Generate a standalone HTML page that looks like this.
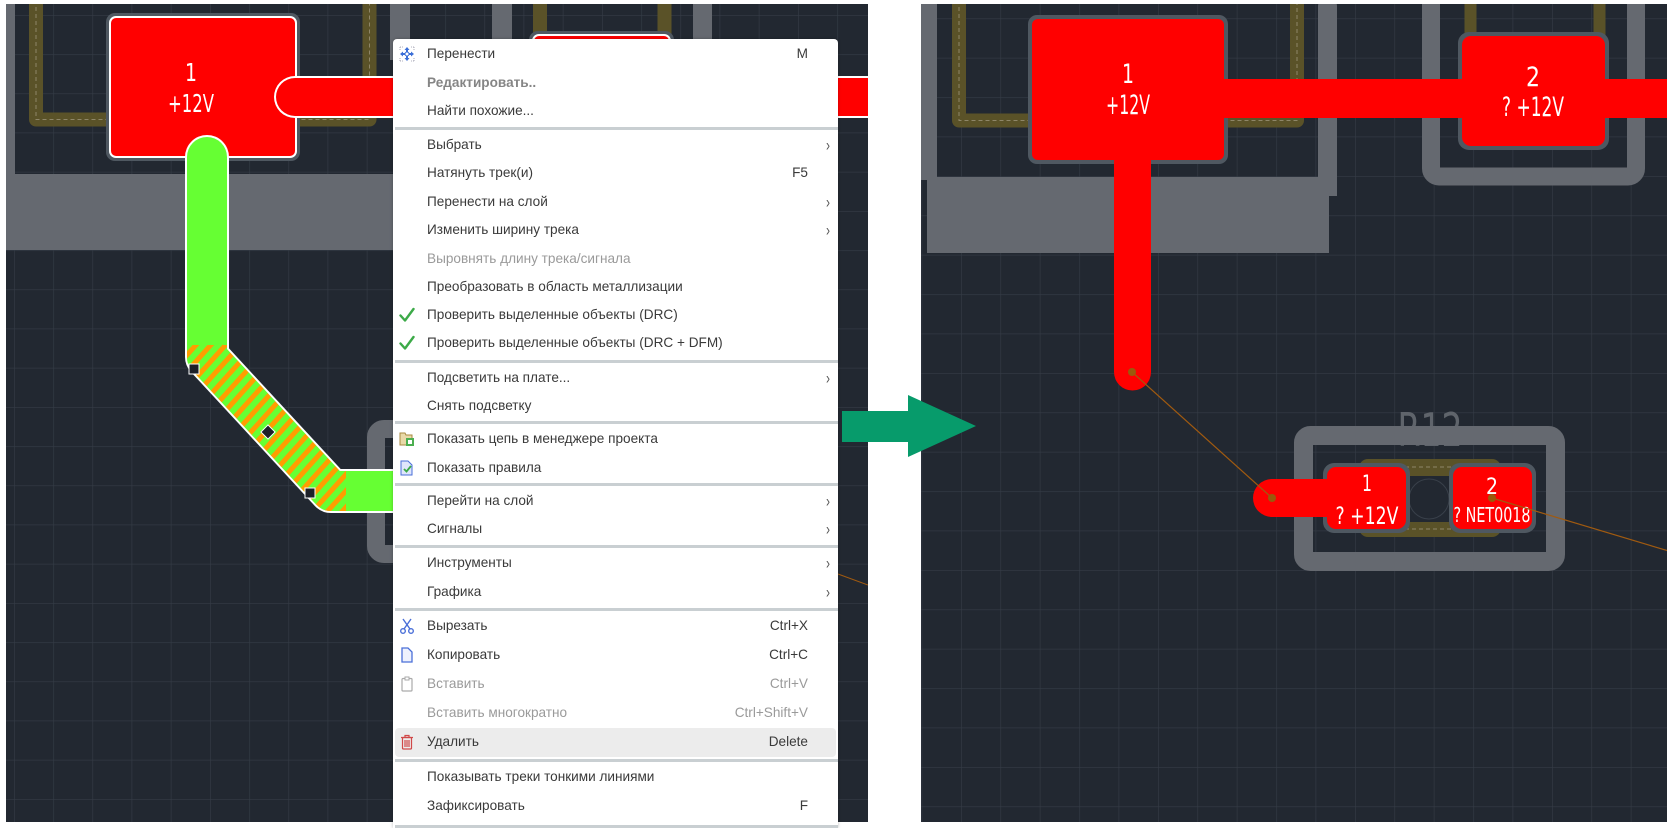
<!DOCTYPE html>
<html><head><meta charset="utf-8">
<style>
html,body{margin:0;padding:0;background:#fff;}
body{width:1672px;height:828px;position:relative;overflow:hidden;font-family:"Liberation Sans",sans-serif;}
svg.bg{position:absolute;left:0;top:0;}
.menu{position:absolute;left:393px;top:39px;width:445px;height:789px;background:#fff;border-radius:4px 4px 0 0;box-shadow:0 0 3px rgba(0,0,0,.25);}
.it{position:absolute;left:0;width:445px;height:20px;line-height:20px;font-size:13.6px;color:#3a3a3a;}
.it .t{position:absolute;left:34px;white-space:nowrap;}
.it .k{position:absolute;right:30px;white-space:nowrap;}
.it .c{position:absolute;right:8px;font-size:12px;color:#555;transform:scaleY(1.4);}
.it .i{position:absolute;left:6px;top:2px;width:16px;height:16px;}
.dis{color:#9a9a9a !important;}
.sep{position:absolute;left:2px;width:443px;height:3px;background:#c9cfd2;}
.hl{position:absolute;left:2px;width:441px;height:29px;background:#ececec;border-radius:4px;}
.pcb{font-family:"Liberation Sans Narrow","DejaVu Sans Condensed","Liberation Sans",sans-serif;fill:#fff;text-anchor:middle;}
</style></head><body>
<svg class="bg" width="1672" height="828" viewBox="0 0 1672 828">
<defs>
<pattern id="gL" x="14" y="15" width="39.2" height="39.2" patternUnits="userSpaceOnUse">
<path d="M0 0H39.2M0 0V39.2" stroke="#353c46" stroke-width="1.2" fill="none"/></pattern>
<pattern id="gR" x="15.4" y="18.4" width="39.4" height="39.4" patternUnits="userSpaceOnUse">
<path d="M0 0H39.4M0 0V39.4" stroke="#353c46" stroke-width="1.2" fill="none"/></pattern>
<pattern id="hatch" width="11" height="11" patternUnits="userSpaceOnUse" patternTransform="rotate(42)">
<rect width="11" height="11" fill="#66ff33"/><rect width="5" height="11" fill="#ff9d00"/></pattern>
<clipPath id="cL"><rect x="6" y="4" width="862" height="818"/></clipPath>
<clipPath id="cR"><rect x="921" y="4" width="746" height="818"/></clipPath>
</defs>
<!-- LEFT PANEL -->
<g clip-path="url(#cL)">
<rect x="6" y="4" width="862" height="818" fill="#222831"/>
<rect x="6" y="4" width="862" height="818" fill="url(#gL)"/>
<rect x="6" y="4" width="9" height="172" fill="#656970"/>
<rect x="6" y="174" width="410" height="76" fill="#656970"/>
<rect x="390" y="0" width="20" height="60" fill="#656970"/>
<rect x="492" y="0" width="20" height="60" fill="#656970"/>
<rect x="693" y="0" width="19" height="60" fill="#656970"/>
<path d="M36 0V119.5H369.5V0" stroke="#5a5228" stroke-width="14" fill="none" stroke-linejoin="round"/>
<path d="M36 0V119.5H369.5V0" stroke="#8e8668" stroke-width="1" stroke-dasharray="4 3" fill="none"/>
<path d="M540 0V40M664.5 0V40" stroke="#5a5228" stroke-width="14"/>
<rect x="106" y="13" width="194" height="148" rx="9" fill="#4f5861"/>
<rect x="110" y="17" width="186" height="140" rx="6" fill="#ff0000" stroke="#fff" stroke-width="2"/>
<text class="pcb" x="191" y="81" font-size="25" textLength="12" lengthAdjust="spacingAndGlyphs">1</text>
<text class="pcb" x="191" y="112" font-size="25" textLength="46" lengthAdjust="spacingAndGlyphs">+12V</text>
<rect x="529" y="31" width="145" height="108" rx="9" fill="#4f5861"/>
<rect x="533" y="35" width="137" height="100" rx="6" fill="#ff0000" stroke="#fff" stroke-width="2"/>
<path d="M295 97H880" stroke="#fff" stroke-width="42" stroke-linecap="round"/>
<path d="M295 97H880" stroke="#ff0000" stroke-width="38" stroke-linecap="round"/>
<rect x="376" y="429" width="200" height="125" rx="8" fill="none" stroke="#656970" stroke-width="18"/>
<path d="M207 157V357L331 491H420" stroke="#fff" stroke-width="44" fill="none" stroke-linecap="round" stroke-linejoin="round"/>
<path d="M207 157V357L331 491H420" stroke="#66ff33" stroke-width="40" fill="none" stroke-linecap="round" stroke-linejoin="round"/>
<path d="M207 345V357L331 491H346" stroke="url(#hatch)" stroke-width="40" fill="none" stroke-linejoin="round"/>
<rect x="189" y="364" width="10" height="10" fill="#1d2028" stroke="#fff" stroke-width="1"/>
<rect x="263" y="427" width="10" height="10" fill="#1d2028" stroke="#fff" stroke-width="1" transform="rotate(45 268 432)"/>
<rect x="305" y="488" width="10" height="10" fill="#1d2028" stroke="#fff" stroke-width="1"/>
<path d="M838 574L868 585" stroke="#a05a10" stroke-width="1"/>
</g>
<!-- RIGHT PANEL -->
<g clip-path="url(#cR)">
<rect x="921" y="4" width="746" height="818" fill="#222831"/>
<rect x="921" y="4" width="746" height="818" fill="url(#gR)"/>
<rect x="921" y="0" width="16" height="180" fill="#656970"/>
<rect x="1318" y="0" width="19" height="196" rx="6" fill="#656970"/>
<rect x="927" y="177" width="410" height="19" fill="#656970"/>
<rect x="927" y="190" width="402" height="63" fill="#656970"/>
<path d="M959 0V120.5H1297V0" stroke="#5a5228" stroke-width="14" fill="none" stroke-linejoin="round"/>
<path d="M959 0V120.5H1297V0" stroke="#8e8668" stroke-width="1" stroke-dasharray="4 3" fill="none"/>
<rect x="1431" y="-20" width="205" height="196.5" rx="8" fill="none" stroke="#656970" stroke-width="18"/>
<path d="M1470.5 0V40M1599.5 0V40" stroke="#5a5228" stroke-width="12"/>
<rect x="1028" y="15" width="200" height="149" rx="9" fill="#4f5861"/>
<rect x="1458" y="32" width="151" height="118" rx="11" fill="#4f5861"/>
<rect x="1032" y="19" width="192" height="141" rx="6" fill="#ff0000"/>
<rect x="1462" y="36" width="143" height="110" rx="9" fill="#ff0000"/>
<rect x="1220" y="79" width="460" height="39" fill="#ff0000"/>
<path d="M1132.5 150V372" stroke="#ff0000" stroke-width="37" stroke-linecap="round"/>
<text class="pcb" x="1128" y="83" font-size="27" textLength="12" lengthAdjust="spacingAndGlyphs">1</text>
<text class="pcb" x="1128" y="114" font-size="27" textLength="44" lengthAdjust="spacingAndGlyphs">+12V</text>
<text class="pcb" x="1533" y="86" font-size="27" textLength="14" lengthAdjust="spacingAndGlyphs">2</text>
<text class="pcb" x="1533" y="116" font-size="27" textLength="62" lengthAdjust="spacingAndGlyphs">? +12V</text>
<text x="1430" y="446" font-size="46" fill="#5f646b" text-anchor="middle" font-family="Liberation Sans Narrow,DejaVu Sans Condensed,sans-serif" textLength="65" lengthAdjust="spacingAndGlyphs">R12</text>
<rect x="1303.5" y="435.5" width="252" height="126" rx="7" fill="none" stroke="#656970" stroke-width="19"/>
<rect x="1359" y="459" width="142" height="78" rx="9" fill="#5a5228"/>
<path d="M1370 467H1490M1370 529H1490" stroke="#8e8668" stroke-dasharray="4 3"/>
<rect x="1408" y="476" width="42" height="46" fill="#222831"/>
<circle cx="1429" cy="499" r="20" fill="none" stroke="#39404a"/>
<rect x="1323" y="463" width="87" height="70" rx="11" fill="#4f5861"/>
<rect x="1449" y="463" width="87" height="70" rx="11" fill="#4f5861"/>
<rect x="1327" y="467" width="79" height="62" rx="9" fill="#ff0000"/>
<rect x="1453" y="467" width="79" height="62" rx="9" fill="#ff0000"/>
<path d="M1272 498H1335" stroke="#ff0000" stroke-width="38" stroke-linecap="round"/>
<text class="pcb" x="1367" y="491" font-size="22" textLength="10" lengthAdjust="spacingAndGlyphs">1</text>
<text class="pcb" x="1367" y="524" font-size="24" textLength="63" lengthAdjust="spacingAndGlyphs">? +12V</text>
<text class="pcb" x="1492" y="494" font-size="22" textLength="12" lengthAdjust="spacingAndGlyphs">2</text>
<text class="pcb" x="1492" y="522" font-size="20" textLength="77" lengthAdjust="spacingAndGlyphs">? NET0018</text>
<path d="M1132 372L1272 498M1492 498L1672 552" stroke="#a05a10" stroke-width="1.2"/>
<circle cx="1132" cy="372" r="4" fill="#9a5a0c"/>
<circle cx="1272" cy="498" r="4" fill="#9a5a0c"/>
<circle cx="1492" cy="498" r="4" fill="#9a5a0c"/>
</g>
<!-- ARROW -->
<path d="M842 411H908V395L976 426L908 457V442H842Z" fill="#079b6b"/>
</svg>

<div class="menu">
<div class="hl" style="top:689px"></div>
<div class="sep" style="top:88px"></div>
<div class="sep" style="top:321px"></div>
<div class="sep" style="top:382px"></div>
<div class="sep" style="top:444px"></div>
<div class="sep" style="top:506px"></div>
<div class="sep" style="top:569px"></div>
<div class="sep" style="top:720px"></div>
<div class="sep" style="top:786px"></div>

<div class="it" style="top:5px"><svg class="i" viewBox="0 0 16 16"><g fill="#3b6fd8"><path d="M8 1L5.5 4h5zM8 15l-2.5-3h5zM1 8l3-2.5v5zM15 8l-3-2.5v5z"/><rect x="3" y="7" width="10" height="2"/><rect x="7" y="3" width="2" height="10"/></g><circle cx="8" cy="8" r="2" fill="#fff" stroke="#3b6fd8"/><path d="M1 1h3M12 1h3M1 15h3M12 15h3M1 1v3M15 1v3M1 12v3M15 12v3" stroke="#99a" stroke-width=".8" stroke-dasharray="1 1"/></svg><span class="t">Перенести</span><span class="k">M</span></div>
<div class="it" style="top:34px"><span class="t" style="font-weight:bold;color:#858585">Редактировать..</span></div>
<div class="it" style="top:62px"><span class="t">Найти похожие...</span></div>
<div class="it" style="top:96px"><span class="t">Выбрать</span><span class="c">›</span></div>
<div class="it" style="top:124px"><span class="t">Натянуть трек(и)</span><span class="k">F5</span></div>
<div class="it" style="top:153px"><span class="t">Перенести на слой</span><span class="c">›</span></div>
<div class="it" style="top:181px"><span class="t">Изменить ширину трека</span><span class="c">›</span></div>
<div class="it" style="top:210px"><span class="t dis">Выровнять длину трека/сигнала</span></div>
<div class="it" style="top:238px"><span class="t">Преобразовать в область металлизации</span></div>
<div class="it" style="top:266px"><svg class="i" viewBox="0 0 16 16"><path d="M1.5 8.5L6 13.5L14.5 2" stroke="#3caa48" stroke-width="2.4" fill="none" stroke-linecap="round" stroke-linejoin="round"/></svg><span class="t">Проверить выделенные объекты (DRC)</span></div>
<div class="it" style="top:294px"><svg class="i" viewBox="0 0 16 16"><path d="M1.5 8.5L6 13.5L14.5 2" stroke="#3caa48" stroke-width="2.4" fill="none" stroke-linecap="round" stroke-linejoin="round"/></svg><span class="t">Проверить выделенные объекты (DRC + DFM)</span></div>
<div class="it" style="top:329px"><span class="t">Подсветить на плате...</span><span class="c">›</span></div>
<div class="it" style="top:357px"><span class="t">Снять подсветку</span></div>
<div class="it" style="top:390px"><svg class="i" viewBox="0 0 16 16"><path d="M1 2h5l1 2h6v10H1z" fill="#e9d9a8" stroke="#a88a40"/><rect x="7" y="7" width="8" height="8" fill="#4caf50"/><rect x="9" y="9" width="4" height="4" fill="#fff"/></svg><span class="t">Показать цепь в менеджере проекта</span></div>
<div class="it" style="top:419px"><svg class="i" viewBox="0 0 16 16"><path d="M2 1h7l4 4v10H2z" fill="#dfe6fb" stroke="#4a6fd8"/><path d="M5 9l2.5 2.5L12 6" stroke="#3caa48" stroke-width="1.8" fill="none"/></svg><span class="t">Показать правила</span></div>
<div class="it" style="top:452px"><span class="t">Перейти на слой</span><span class="c">›</span></div>
<div class="it" style="top:480px"><span class="t">Сигналы</span><span class="c">›</span></div>
<div class="it" style="top:514px"><span class="t">Инструменты</span><span class="c">›</span></div>
<div class="it" style="top:543px"><span class="t">Графика</span><span class="c">›</span></div>
<div class="it" style="top:577px"><svg class="i" viewBox="0 0 16 16"><g stroke="#4a6fd8" stroke-width="1.4" fill="none"><path d="M4 1L11 11M12 1L5 11"/><circle cx="4" cy="13" r="2.3"/><circle cx="12" cy="13" r="2.3"/></g></svg><span class="t">Вырезать</span><span class="k">Ctrl+X</span></div>
<div class="it" style="top:606px"><svg class="i" viewBox="0 0 16 16"><path d="M3 1h6l4 4v10H3z" fill="#eef1fd" stroke="#4a6fd8" stroke-width="1.3"/></svg><span class="t">Копировать</span><span class="k">Ctrl+C</span></div>
<div class="it" style="top:635px"><svg class="i" viewBox="0 0 16 16"><rect x="3" y="2.5" width="10" height="12.5" rx="1" fill="none" stroke="#aaa" stroke-width="1.2"/><rect x="6" y="1" width="4" height="3" fill="#fff" stroke="#aaa"/></svg><span class="t dis">Вставить</span><span class="k dis">Ctrl+V</span></div>
<div class="it" style="top:664px"><span class="t dis">Вставить многократно</span><span class="k dis">Ctrl+Shift+V</span></div>
<div class="it" style="top:693px"><svg class="i" viewBox="0 0 16 16"><g stroke="#d04848" stroke-width="1.2" fill="none"><path d="M2 3.5h12M6 3.5V1.5h4v2"/><rect x="3.5" y="3.5" width="9" height="11.5" rx="1"/><path d="M6 6v7M8 6v7M10 6v7"/></g></svg><span class="t">Удалить</span><span class="k">Delete</span></div>
<div class="it" style="top:728px"><span class="t">Показывать треки тонкими линиями</span></div>
<div class="it" style="top:757px"><span class="t">Зафиксировать</span><span class="k">F</span></div>
</div>
</body></html>
